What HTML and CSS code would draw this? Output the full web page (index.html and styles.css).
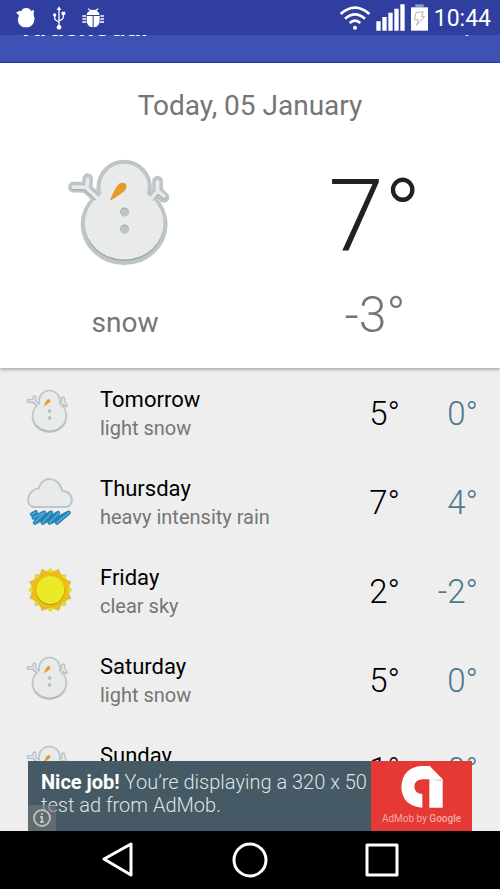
FILE: index.html
```
<!DOCTYPE html>
<html lang="en">

<head>
	<meta charset="utf-8">
	<meta name="viewport" content="width=device-width, initial-scale=1">
	<title>Weather</title>
	<link rel="stylesheet" href="styles.css">
</head>

<body>
	<!-- shared weather icons -->
	<svg class="sprites" aria-hidden="true">
		<symbol id="snow" viewBox="52 54 350 350">
			<g fill="none" stroke="#bdc5c9" stroke-width="32" stroke-linecap="round" stroke-linejoin="round">
				<path d="M71 141L108 142L138 170M112 141L114 116M323 123V153L342 172M323 153L306 174" />
			</g>
			<g fill="#bdc5c9">
				<circle cx="223" cy="142" r="83" />
				<ellipse cx="223" cy="253" rx="130" ry="121" />
			</g>
			<ellipse cx="223" cy="254" rx="118" ry="108" fill="#9ea5a8" />
			<g fill="#e9eaea">
				<circle cx="223" cy="142" r="71" />
				<ellipse cx="223" cy="250" rx="118" ry="108" />
			</g>
			<path d="M71 144L108 146L138 174M323 156L342 171M323 156L306 176" fill="none" stroke="#9ea5a8" stroke-width="11" stroke-linecap="round" />
			<path d="M71 141L108 142L142 174M112 141L114 118M323 125V153L342 168M323 153L304 176" fill="none" stroke="#e9eaea" stroke-width="11" stroke-linecap="round" stroke-linejoin="round" />
			<path d="M180 182Q194 145 208 131Q219 124 228 132Q233 142 225 151Q210 165 180 182Z" fill="#e79a2b" />
			<circle cx="224" cy="215" r="13" fill="#9ea5a8" />
			<circle cx="224" cy="217" r="12" fill="#bdc5c9" />
			<circle cx="224" cy="266" r="13" fill="#9ea5a8" />
			<circle cx="224" cy="268" r="12" fill="#bdc5c9" />
		</symbol>
		<symbol id="rain" viewBox="78 322 144 144">
			<path d="M104 409C76 409 77 359 117 353C124 315 178 315 186 360C223 360 224 409 196 409Z" fill="#bdc5c9" stroke="#bdc5c9" stroke-width="6" />
			<path d="M104 406C79 406 80 361 119 355C126 318 176 318 184 363C219 363 220 406 195 406Z" fill="#e9eaea" />
			<g fill="none" stroke-linecap="round" stroke-linejoin="round">
				<path d="M96 431L107 425L101 441L132 426L105 456L153 426L128 456L174 427L149 456L206 426L171 456" stroke="#2880b0" stroke-width="13" />
				<path d="M96 431L107 425M102 440L132 426M105 456L132 428M128 456L153 427M149 456L176 427M171 456L206 426" stroke="#45aadb" stroke-width="5" />
			</g>
		</symbol>
		<symbol id="sun" viewBox="-73 -69 144 144">
			<path d="M0-65L19-46L46-46L46-19L65 0L46 19L46 46L19 46L0 65L-19 46L-46 46L-46 19L-65 0L-46-19L-46-46L-19-46Z" fill="#e5e11f" stroke="#b9a83a" stroke-width="1" />
			<path d="M0-50L25-62L35-35L62-25L50 0L62 25L35 35L25 62L0 50L-25 62L-35 35L-62 25L-50 0L-62-25L-35-35L-25-62Z" fill="#efbd16" stroke="#bb9524" stroke-width="1" />
			<circle cy="2" r="43" fill="#ad9420" />
			<circle r="42" fill="#ecea24" />
		</symbol>
	</svg>

	<div class="status-bar">
		<div class="status-left">
			<svg width="20" height="20" viewBox="48 22 60 60" fill="#fff">
				<path d="M48 36L58 30L64 32Q67 22 79 22Q90 22 93 31L102 28L101 42Q106 54 101 66Q94 80 78 80Q62 80 55 66Q52 54 57 44Z" />
			</svg>
			<svg width="14" height="24" viewBox="157 17 42 72" fill="none" stroke="#fff" stroke-width="4">
				<path d="M178 28V80M165 44V54Q165 60 178 65M191 40V50Q191 57 178 61" />
				<path d="M171 29L178 18L185 29ZM186 34H197V44H186Z" fill="#fff" stroke="none" />
				<circle cx="165" cy="44" r="5" fill="#fff" stroke="none" />
				<circle cx="178" cy="81" r="7" fill="#fff" stroke="none" />
			</svg>
			<svg width="22" height="20" viewBox="246 22 66 60" fill="#fff">
				<path d="M260 43Q261 33 270 30L263 25L265 23L273 28Q280 26 286 28L294 23L296 25L290 30Q298 34 299 43ZM260 46H278V80Q260 77 260 60ZM281 46H299V60Q299 77 281 80Z" />
				<path d="M247 46H258M247 55H258M247 64H259M301 46H312M301 55H312M300 64H312" stroke="#fff" stroke-width="4" />
			</svg>
		</div>
		<div class="status-right">
			<svg width="30" height="24" viewBox="270 19 90 72" fill="none" stroke="#fff" stroke-width="8">
				<path d="M272 43Q315 5 358 43M285 57Q315 31 345 57M299 70Q315 56 331 70" />
				<circle cx="315" cy="84" r="6" fill="#fff" stroke="none" />
			</svg>
			<svg width="29" height="27" viewBox="375 11 87 81" fill="#fff">
				<path d="M376 63H389V91H376ZM394 50H407V91H394ZM412 37H425V91H412ZM430 25H443V91H430ZM448 12H461V91H448Z" />
			</svg>
			<svg width="17" height="27" viewBox="483 11 51 81">
				<path d="M496 12H521V21H496Z" fill="#8f98d0" />
				<path d="M483 21H534V91H483Z" fill="#fff" />
				<path d="M498 37L520 34L514 48H524L500 75L505 58H493Z" fill="none" stroke="#b5b5b5" stroke-width="3" />
			</svg>
			<span class="clock">10:44</span>
		</div>
	</div>

	<header class="app-bar">
		<h1 class="city">Krasnodar</h1>
		<button class="more" aria-label="More options">
			<svg width="6" height="20" viewBox="0 0 6 20" fill="#fff">
				<circle cx="3" cy="3" r="2" />
				<circle cx="3" cy="10" r="2" />
				<circle cx="3" cy="17" r="2" />
			</svg>
		</button>
	</header>

	<section class="today">
		<h2 class="date">Today, 05 January</h2>
		<div class="today-body">
			<div class="today-col">
				<svg class="today-icon"><use href="#snow" /></svg>
				<div class="today-desc">snow</div>
			</div>
			<div class="today-col">
				<div class="today-high">7°</div>
				<div class="today-low">-3°</div>
			</div>
		</div>
	</section>

	<main class="forecast">
		<ul class="days">
			<li class="day">
				<svg class="day-icon"><use href="#snow" /></svg>
				<div class="day-text">
					<div class="day-name">Tomorrow</div>
					<div class="day-desc">light snow</div>
				</div>
				<div class="high">5°</div>
				<div class="low">0°</div>
			</li>
			<li class="day">
				<svg class="day-icon"><use href="#rain" /></svg>
				<div class="day-text">
					<div class="day-name">Thursday</div>
					<div class="day-desc">heavy intensity rain</div>
				</div>
				<div class="high">7°</div>
				<div class="low">4°</div>
			</li>
			<li class="day">
				<svg class="day-icon"><use href="#sun" /></svg>
				<div class="day-text">
					<div class="day-name">Friday</div>
					<div class="day-desc">clear sky</div>
				</div>
				<div class="high">2°</div>
				<div class="low">-2°</div>
			</li>
			<li class="day">
				<svg class="day-icon"><use href="#snow" /></svg>
				<div class="day-text">
					<div class="day-name">Saturday</div>
					<div class="day-desc">light snow</div>
				</div>
				<div class="high">5°</div>
				<div class="low">0°</div>
			</li>
			<li class="day">
				<svg class="day-icon"><use href="#snow" /></svg>
				<div class="day-text">
					<div class="day-name">Sunday</div>
					<div class="day-desc"></div>
				</div>
				<div class="high">1°</div>
				<div class="low">0°</div>
			</li>
		</ul>

		<aside class="ad">
			<div class="ad-text"><b>Nice job!</b> You’re displaying a 320 x 50 test ad from AdMob.</div>
			<div class="ad-logo">
				<svg width="42" height="42" viewBox="452 108 126 126">
					<path d="M515 108H538L577 148V233H537V148H515Q492 150 492 171Q494 191 516 192V233Q455 228 453 171Q456 112 515 108Z" fill="#fff" />
					<path d="M537 148H577V155Z" fill="#ddd" />
				</svg>
				<span class="ad-brand">AdMob by <b>Google</b></span>
			</div>
			<button class="ad-info" aria-label="About this ad">
				<svg width="18" height="18" viewBox="0 0 18 18" fill="none" stroke="#b9bdbf" stroke-width="2">
					<circle cx="9" cy="9" r="8" />
					<path d="M9 4V6M7 8H9V13M7 13H11" />
				</svg>
			</button>
		</aside>
	</main>

	<nav class="nav-bar">
		<button class="nav-btn" aria-label="Back">
			<svg width="36" height="36" viewBox="0 0 36 36"><path d="M31 2V33L4 17Z" /></svg>
		</button>
		<button class="nav-btn" aria-label="Home">
			<svg width="36" height="36" viewBox="0 0 36 36"><circle cx="18" cy="18" r="16" /></svg>
		</button>
		<button class="nav-btn" aria-label="Recent apps">
			<svg width="36" height="36" viewBox="0 0 36 36"><path d="M3 3H33V33H3Z" /></svg>
		</button>
	</nav>
</body>

</html>
```
FILE: styles.css
```
* {
	box-sizing: border-box;
}

body {
	margin: 0;
	height: 100vh;
	display: flex;
	flex-direction: column;
	overflow: hidden;
	background-color: #eee;
	font-family: Roboto, sans-serif;
}

h1,
h2,
ul {
	margin: 0;
	padding: 0;
}

svg {
	display: block;
}

button {
	padding: 0;
	border: none;
	background: none;
	cursor: pointer;
}

.sprites {
	display: none;
}

.status-bar {
	position: relative;
	z-index: 1;
	flex: none;
	height: 35px;
	padding: 0 9px 0 16px;
	display: flex;
	justify-content: space-between;
	align-items: center;
	background-color: #303f9f;
	color: #fff;
}

.status-left,
.status-right {
	display: flex;
	align-items: center;
}

.status-left {
	gap: 16px;
}

.status-right {
	gap: 6px;
}

.clock {
	padding-top: 2px;
	font-size: 23px;
	line-height: 35px;
}

/* scrolled up under the status bar */
.app-bar {
	flex: none;
	height: 78px;
	margin-top: -50px;
	padding: 6px 30px 0 22px;
	display: flex;
	justify-content: space-between;
	align-items: center;
	background-color: #3f51b5;
	border-bottom: 1px solid #2742b0;
	color: #fff;
}

.city {
	font-size: 28px;
	font-weight: 500;
}

.today {
	position: relative;
	z-index: 1;
	flex: none;
	padding: 25px 0 24px;
	background-color: #fff;
	color: #757575;
	box-shadow: 0 1px 4px rgba(0, 0, 0, 0.4);
}

.date {
	font-size: 28px;
	line-height: 36px;
	font-weight: 400;
	text-align: center;
}

.today-body {
	display: flex;
	margin-top: 34px;
}

.today-col {
	flex: 1;
	display: flex;
	flex-direction: column;
	align-items: center;
}

.today-icon {
	width: 117px;
	height: 117px;
}

.today-desc {
	margin-top: 30px;
	font-size: 28px;
	line-height: 36px;
}

.today-high {
	font-size: 100px;
	line-height: 116px;
	font-weight: 300;
	color: #212121;
}

.today-low {
	margin-top: 12px;
	font-size: 50px;
	line-height: 58px;
	font-weight: 300;
}

.forecast {
	position: relative;
	flex: 1;
	min-height: 0;
	overflow: hidden;
}

.days {
	list-style: none;
}

.day {
	height: 89px;
	padding: 0 22px 0 26px;
	display: flex;
	align-items: center;
}

.day-icon {
	width: 48px;
	height: 48px;
}

.day-text {
	flex: 1;
	margin-left: 26px;
	padding-top: 2px;
}

.day-name {
	font-size: 22px;
	line-height: 28px;
	color: #000;
}

.day-desc {
	min-height: 28px;
	font-size: 20px;
	line-height: 28px;
	color: #757575;
}

.high,
.low {
	width: 78px;
	padding-top: 2px;
	font-size: 33px;
	font-weight: 300;
	text-align: right;
	color: #000;
}

.low {
	color: #4f788c;
}

.ad {
	position: absolute;
	left: 28px;
	right: 28px;
	bottom: 0;
	height: 70px;
	display: flex;
	background-color: #455a64;
	color: #dfe3e5;
}

.ad-text {
	flex: 1;
	padding: 10px 0 0 13px;
	font-size: 20px;
	line-height: 23px;
	font-weight: 300;
}

.ad-text b {
	font-weight: 700;
	color: #fff;
}

.ad-logo {
	width: 101px;
	padding-top: 5px;
	display: flex;
	flex-direction: column;
	align-items: center;
	background-color: #e53935;
}

.ad-brand {
	margin-top: 4px;
	font-size: 10px;
	line-height: 14px;
	color: #f5a9a7;
}

.ad-brand b {
	font-weight: 500;
}

.ad-info {
	position: absolute;
	left: 0;
	bottom: 0;
	width: 28px;
	height: 26px;
	display: flex;
	justify-content: center;
	align-items: center;
	background-color: rgba(117, 117, 117, 0.6);
}

.nav-bar {
	flex: none;
	height: 58px;
	display: flex;
	justify-content: center;
	align-items: center;
	gap: 96px;
	background-color: #000;
}

.nav-btn svg {
	fill: none;
	stroke: #fff;
	stroke-width: 3;
	stroke-linejoin: round;
}
```
